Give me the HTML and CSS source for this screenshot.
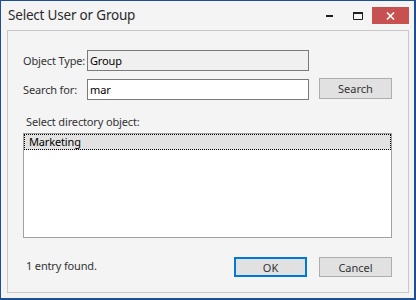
FILE: index.html
```html
<!DOCTYPE html>
<html>
<head>
    <meta charset="UTF-8">
    <title>Select User or Group</title>
    <link rel="stylesheet" href="styles.css">
</head>
<body>

<div class="window">
    <div class="titlebar">
        <div class="title">Select User or Group</div>
        <div class="controls">
            <div class="tb-btn">
                <svg width="7" height="2" viewBox="0 0 7 2"><rect width="7" height="2" fill="#1e1e1e"/></svg>
            </div>
            <div class="tb-btn">
                <svg width="10" height="8" viewBox="0 0 10 8"><path d="M0.5 0.5h9v7h-9z" fill="none" stroke="#1e1e1e" stroke-width="1"/><rect x="0" y="0" width="10" height="2" fill="#1e1e1e"/></svg>
            </div>
            <div class="tb-btn close-btn">
                <svg width="9" height="8" viewBox="0 0 9 8"><path d="M1 0.5l7 7M8 0.5l-7 7" stroke="#fff" stroke-width="1.6"/></svg>
            </div>
        </div>
    </div>

    <div class="panel">
        <div class="field-row">
            <span class="label">Object Type:</span>
            <div class="field readonly">Group</div>
        </div>
        <div class="field-row search-row">
            <span class="label">Search for:</span>
            <div class="field">mar</div>
            <button class="btn">Search</button>
        </div>

        <div class="list-label">Select directory object:</div>
        <div class="list">
            <div class="list-item selected">Marketing</div>
        </div>

        <div class="footer">
            <span class="status">1 entry found.</span>
            <div class="actions">
                <button class="btn default">OK</button>
                <button class="btn">Cancel</button>
            </div>
        </div>
    </div>
</div>

</body>
</html>
```

FILE: styles.css
```css
html, body {
    margin: 0;
    padding: 0;
}

body {
    font-family: "Noto Sans", "Open Sans", sans-serif;
    font-size: 11px;
    letter-spacing: -0.15px;
    color: #1a1a1a;
}

.window {
    width: 416px;
    height: 300px;
    box-sizing: border-box;
    border: 1px solid #1f4f92;
    border-width: 1px 2px 2px 1px;
    background-color: #f4f4f4;
    display: flex;
    flex-direction: column;
}

.titlebar {
    height: 29px;
    display: flex;
    justify-content: space-between;
    flex-shrink: 0;
}

.title {
    padding: 5px 0 0 7px;
    font-size: 13.5px;
    letter-spacing: -0.2px;
    color: #2b2b2b;
}

.controls {
    display: grid;
    grid-template-columns: 27px 27px 37px;
    grid-template-rows: 17px;
    column-gap: 1px;
    width: 93px;
    padding: 6px 5px 0 0;
}

.tb-btn {
    display: flex;
    align-items: center;
    justify-content: center;
}

.close-btn {
    background-color: #c75050;
}

.panel {
    flex: 1;
    margin: 0 5px 5px 6px;
    border: 1px solid #c8c8c8;
    padding: 19px 16px 0 15px;
    display: flex;
    flex-direction: column;
}

.field-row {
    display: flex;
    align-items: center;
    height: 21px;
}

.search-row {
    margin-top: 8px;
}

.label {
    width: 64px;
    color: #333;
}

.field {
    width: 222px;
    height: 21px;
    box-sizing: border-box;
    border: 1px solid #7a7a7a;
    background-color: #fff;
    padding: 0 2px;
    line-height: 19px;
    color: #000;
}

.field.readonly {
    background-color: #f0f0f0;
}

.btn {
    font-family: inherit;
    font-size: 11px;
    color: #333;
    width: 73px;
    height: 21px;
    box-sizing: border-box;
    border: 1px solid #adadad;
    background-color: #e1e1e1;
    padding: 0;
}

.search-row .btn {
    margin: -2px 0 0 10px;
}

.list-label {
    margin: 14px 0 0 3px;
    height: 19px;
    color: #333;
}

.list {
    height: 105px;
    box-sizing: border-box;
    border: 1px solid #a0a0a0;
    background-color: #fff;
}

.list-item {
    height: 16px;
    line-height: 14px;
    padding: 0 4px;
    box-sizing: border-box;
    color: #000;
}

.list-item.selected {
    background-color: #e2e2e2;
    border: 1px dotted #000;
}

.footer {
    margin-top: 19px;
    display: flex;
    justify-content: space-between;
    align-items: flex-start;
}

.status {
    padding: 1px 0 0 3px;
    color: #333;
}

.actions {
    display: flex;
    gap: 12px;
}

.actions .btn {
    height: 20px;
}

.btn.default {
    border: 2px solid #0078d7;
}
```
